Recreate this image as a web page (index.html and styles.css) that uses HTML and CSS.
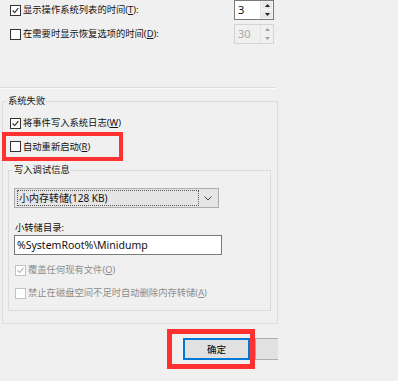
FILE: index.html
```html
<!DOCTYPE html>
<html>
<head>
    <meta charset="utf-8">
    <title>启动和故障恢复</title>
    <link rel="stylesheet" href="styles.css">
</head>
<body>
    <div class="dialog">
        <div class="row top-row">
            <label class="check">
                <span class="cb checked"><svg viewBox="0 0 11 11"><path d="M2 5.5 L4.5 8 L9 2.5" /></svg></span>
                <span>显示操作系统列表的时间(<u>T</u>):</span>
            </label>
            <div class="spinner">
                <span class="spin-value">3</span>
                <span class="spin-buttons">
                    <span class="spin-btn"><svg viewBox="0 0 7 4"><path d="M0 4 L3.5 0 L7 4 Z" /></svg></span>
                    <span class="spin-btn"><svg viewBox="0 0 7 4"><path d="M0 0 L3.5 4 L7 0 Z" /></svg></span>
                </span>
            </div>
        </div>
        <div class="row top-row second">
            <label class="check">
                <span class="cb"></span>
                <span>在需要时显示恢复选项的时间(<u>D</u>):</span>
            </label>
            <div class="spinner disabled">
                <span class="spin-value">30</span>
                <span class="spin-buttons">
                    <span class="spin-btn"><svg viewBox="0 0 7 4"><path d="M0 4 L3.5 0 L7 4 Z" /></svg></span>
                    <span class="spin-btn"><svg viewBox="0 0 7 4"><path d="M0 0 L3.5 4 L7 0 Z" /></svg></span>
                </span>
            </div>
        </div>

        <div class="separator"></div>

        <fieldset class="group outer">
            <legend>系统失败</legend>
            <label class="check row-check">
                <span class="cb checked"><svg viewBox="0 0 11 11"><path d="M2 5.5 L4.5 8 L9 2.5" /></svg></span>
                <span>将事件写入系统日志(<u>W</u>)</span>
            </label>
            <div class="highlight">
                <label class="check">
                    <span class="cb"></span>
                    <span>自动重新启动(<u>R</u>)</span>
                </label>
            </div>

            <fieldset class="group inner">
                <legend>写入调试信息</legend>
                <div class="combo">
                    <span class="combo-text">小内存转储(128 KB)</span>
                    <svg class="chevron" viewBox="0 0 8 5"><path d="M0.5 0.5 L4 4 L7.5 0.5" /></svg>
                </div>
                <div class="field-label">小转储目录:</div>
                <div class="textbox">%SystemRoot%\Minidump</div>
                <label class="check row-check disabled first">
                    <span class="cb checked"><svg viewBox="0 0 11 11"><path d="M2 5.5 L4.5 8 L9 2.5" /></svg></span>
                    <span>覆盖任何现有文件(<u>O</u>)</span>
                </label>
                <label class="check row-check disabled">
                    <span class="cb"></span>
                    <span>禁止在磁盘空间不足时自动删除内存转储(<u>A</u>)</span>
                </label>
            </fieldset>
        </fieldset>

        <div class="footer">
            <div class="highlight wide">
                <button class="btn default">确定</button>
            </div>
            <button class="btn" aria-label="取消"></button>
        </div>
    </div>
</body>
</html>
```

FILE: styles.css
```css
body {
    margin: 0;
    background-color: #f0f0f0;
    font-family: "Microsoft YaHei", "Noto Sans", "Noto Sans CJK SC", sans-serif;
    font-size: 9.3px;
    color: #111;
}

.dialog {
    width: 278px;
    overflow: hidden;
}

u {
    text-decoration-thickness: 1px;
    text-underline-offset: 1px;
}

.row {
    display: flex;
    align-items: center;
    justify-content: space-between;
}

.top-row {
    height: 20px;
    padding-left: 10px;
    padding-right: 4px;
}

.top-row.second {
    margin-top: 4px;
}

.check {
    display: flex;
    align-items: center;
    gap: 2px;
    line-height: 14px;
    white-space: nowrap;
}

.cb {
    width: 11px;
    height: 11px;
    box-sizing: border-box;
    border: 1px solid #333;
    background-color: #fff;
    display: inline-flex;
    flex-shrink: 0;
}

.cb svg {
    width: 9px;
    height: 9px;
    fill: none;
    stroke: #222;
    stroke-width: 1.3;
}

.check.disabled {
    color: #8d8d8d;
}

.check.disabled .cb {
    border-color: #c2c2c2;
}

.check.disabled .cb svg {
    stroke: #b0b0b0;
}

/* spinners */
.spinner {
    display: flex;
    width: 40px;
    height: 20px;
    box-sizing: border-box;
    border: 1px solid #7a7a7a;
    background-color: #fff;
}

.spin-value {
    flex: 1;
    padding-left: 3px;
    line-height: 18px;
    font-size: 11px;
}

.spin-buttons {
    display: flex;
    flex-direction: column;
    width: 12px;
    border-left: 1px solid #e0e0e0;
}

.spin-btn {
    flex: 1;
    display: flex;
    align-items: center;
    justify-content: center;
    background-color: #e8e8e8;
    border: 1px solid #f5f5f5;
}

.spin-btn svg {
    width: 5px;
    height: 3px;
    fill: #222;
}

.spinner.disabled {
    border-color: #d4d4d4;
    background-color: #f0f0f0;
}

.spinner.disabled .spin-value {
    color: #a8a8a8;
}

.spinner.disabled .spin-buttons {
    border-left-color: #e4e4e4;
}

.spinner.disabled .spin-btn {
    background-color: #f0f0f0;
    border-color: #f0f0f0;
}

.spinner.disabled .spin-btn svg {
    fill: #a0a0a0;
}

.separator {
    margin-top: 43px;
    width: 276px;
    border-top: 1px solid #dcdcdc;
    border-bottom: 1px solid #fafafa;
}

/* group boxes */
.group {
    border: 1px solid #dcdcdc;
    margin: 0;
    min-width: 0;
    box-sizing: border-box;
}

.group legend {
    line-height: 16px;
    padding: 0 1px;
}

.group.outer {
    margin: 4px 0 0 2px;
    width: 276px;
    padding: 0 0 12px 7px;
}

.group.outer > legend {
    margin-left: -3px;
}

.row-check {
    height: 18px;
    margin-top: 5px;
}

.highlight {
    margin-left: -8px;
    width: 121px;
    height: 29px;
    box-sizing: border-box;
    border: 4px solid #ff3131;
    padding-left: 4px;
    display: flex;
    align-items: center;
}

.group.inner {
    margin: 1px 0 0 -2px;
    width: 263px;
    padding: 0 0 8px 5px;
}

.group.inner > legend {
    margin-left: -1px;
}

.combo {
    margin-top: 10px;
    width: 205px;
    height: 20px;
    box-sizing: border-box;
    border: 1px solid #adadad;
    background-color: #e5e5e5;
    display: flex;
    align-items: center;
    padding: 2px;
}

.combo-text {
    flex: 1;
    height: 14px;
    line-height: 14px;
    border: 1px dotted #555;
    padding-left: 1px;
    font-size: 10px;
}

.chevron {
    width: 8px;
    height: 5px;
    margin: 0 4px 0 5px;
    fill: none;
    stroke: #444;
    stroke-width: 1;
}

.field-label {
    margin-top: 13px;
    line-height: 14px;
    padding-left: 1px;
}

.textbox {
    width: 208px;
    height: 20px;
    box-sizing: border-box;
    border: 1px solid #7a7a7a;
    background-color: #fff;
    line-height: 18px;
    padding-left: 2px;
    font-size: 10.5px;
}

.check.first {
    margin-top: 6px;
}

.check.disabled {
    padding-left: 1px;
}

/* buttons */
.footer {
    display: flex;
    align-items: center;
    margin-top: 5px;
    padding-left: 167px;
}

.highlight.wide {
    margin-left: 0;
    width: 89px;
    height: 40px;
    border-width: 5px;
    padding-left: 11px;
}

.btn {
    font-family: inherit;
    font-size: 9.5px;
    height: 22px;
    width: 75px;
    flex-shrink: 0;
    padding: 0;
    background-color: #e1e1e1;
    border: 1px solid #adadad;
    color: #000;
}

.btn.default {
    width: 67px;
    border: 2px solid #0078d7;
}
```
